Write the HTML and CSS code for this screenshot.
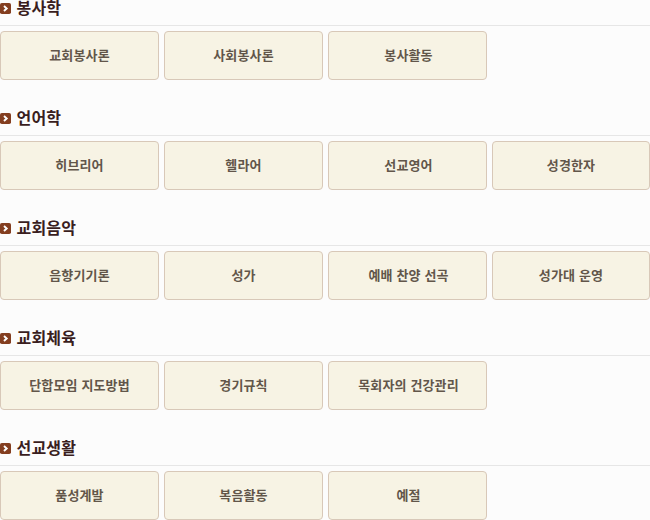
FILE: index.html
```
<!DOCTYPE html>
<html lang="ko">
<head>
    <meta charset="utf-8">
    <title>교과 과정</title>
    <link rel="stylesheet" href="styles.css">
</head>
<body>
    <svg class="defs">
        <symbol id="arrow" viewBox="0 0 11 11">
            <rect width="11" height="11" rx="1.8" fill="#843e20"/>
            <path d="M4 3l2.7 2.5L4 8" fill="none" stroke="#fff" stroke-width="1.9"/>
        </symbol>
    </svg>
    <section>
        <h2><svg class="icon"><use href="#arrow"/></svg><span>봉사학</span></h2>
        <ul>
            <li><span>교회봉사론</span></li>
            <li><span>사회봉사론</span></li>
            <li><span>봉사활동</span></li>
        </ul>
    </section>
    <section>
        <h2><svg class="icon"><use href="#arrow"/></svg><span>언어학</span></h2>
        <ul>
            <li><span>히브리어</span></li>
            <li><span>헬라어</span></li>
            <li><span>선교영어</span></li>
            <li><span>성경한자</span></li>
        </ul>
    </section>
    <section>
        <h2><svg class="icon"><use href="#arrow"/></svg><span>교회음악</span></h2>
        <ul>
            <li><span>음향기기론</span></li>
            <li><span>성가</span></li>
            <li><span>예배 찬양 선곡</span></li>
            <li><span>성가대 운영</span></li>
        </ul>
    </section>
    <section>
        <h2><svg class="icon"><use href="#arrow"/></svg><span>교회체육</span></h2>
        <ul>
            <li><span>단합모임 지도방법</span></li>
            <li><span>경기규칙</span></li>
            <li><span>목회자의 건강관리</span></li>
        </ul>
    </section>
    <section>
        <h2><svg class="icon"><use href="#arrow"/></svg><span>선교생활</span></h2>
        <ul>
            <li><span>품성계발</span></li>
            <li><span>복음활동</span></li>
            <li><span>예절</span></li>
        </ul>
    </section>
</body>
</html>
```
FILE: styles.css
```
body {
    margin: 0;
    background-color: #fcfcfc;
    font-family: "Noto Sans CJK KR", sans-serif;
}
.defs {
    display: none;
}
section + section {
    margin-top: 30px;
}
h2 {
    display: flex;
    box-sizing: border-box;
    height: 26px;
    margin: 0 0 5px;
    border-bottom: 1px solid #e6e6e6;
    font-size: 16px;
    line-height: 15px;
    letter-spacing: 0.2px;
    color: #3a1e1e;
}
.icon {
    width: 11px;
    height: 11px;
    margin: 3px 5.5px 0 0;
}
ul {
    display: grid;
    grid-template-columns: 159px 159px 159px 158px;
    gap: 5px;
    margin: 0;
    padding: 0;
    list-style: none;
}
li {
    display: flex;
    justify-content: center;
    align-items: center;
    box-sizing: border-box;
    height: 49px;
    padding-bottom: 2px;
    border: 1px solid #d8c8b8;
    border-radius: 4px;
    background-color: #f7f3e4;
    font-size: 13px;
    font-weight: bold;
    letter-spacing: 0.15px;
    color: #62564a;
}
li:nth-child(3) {
    padding-left: 2px;
}
```
